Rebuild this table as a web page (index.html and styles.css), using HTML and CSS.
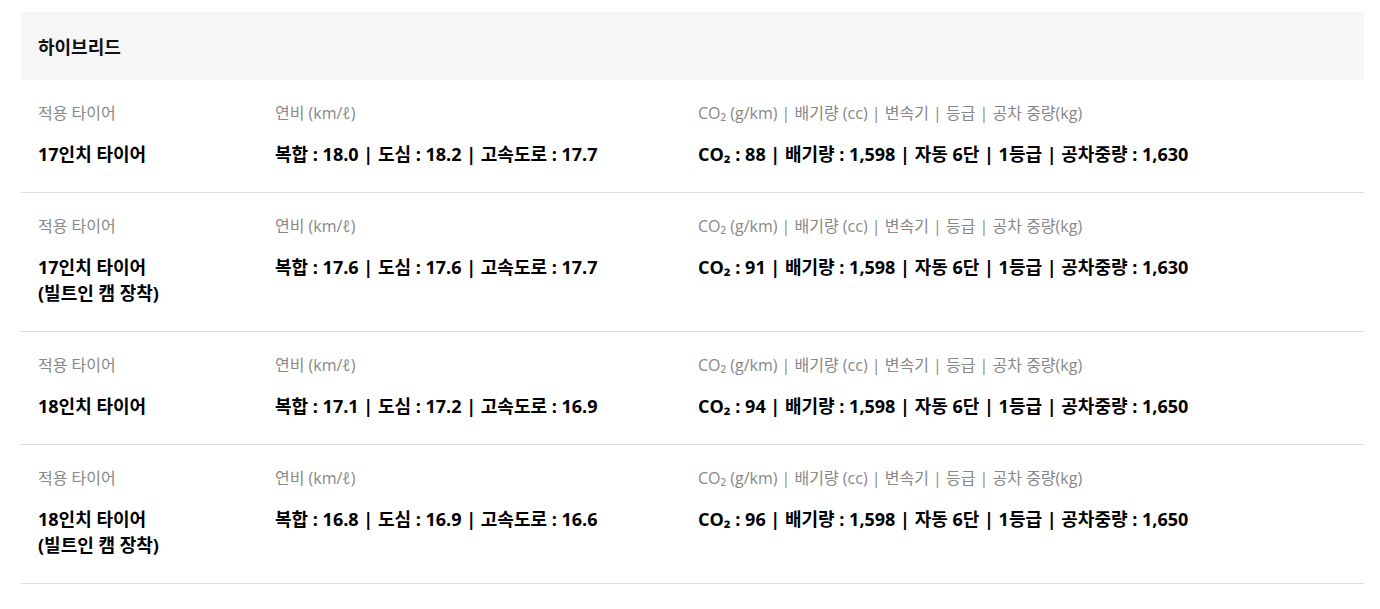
FILE: index.html
```html
<!DOCTYPE html>
<html lang="ko">
<head>
    <meta charset="UTF-8">
    <meta name="viewport" content="width=device-width, initial-scale=1.0">
    <title>하이브리드 제원</title>
    <link rel="stylesheet" href="styles.css">
</head>
<body>
    <div class="spec-box">
        <div class="spec-head">하이브리드</div>

        <div class="spec-row">
            <div class="spec-col col-tire">
                <p class="spec-label">적용 타이어</p>
                <p class="spec-value">17인치 타이어</p>
            </div>
            <div class="spec-col col-fuel">
                <p class="spec-label">연비 (km/ℓ)</p>
                <p class="spec-value">복합 : 18.0 | 도심 : 18.2 | 고속도로 : 17.7</p>
            </div>
            <div class="spec-col">
                <p class="spec-label">CO₂ (g/km) | 배기량 (cc) | 변속기 | 등급 | 공차 중량(kg)</p>
                <p class="spec-value">CO₂ : 88 | 배기량 : 1,598 | 자동 6단 | 1등급 | 공차중량 : 1,630</p>
            </div>
        </div>

        <div class="spec-row">
            <div class="spec-col col-tire">
                <p class="spec-label">적용 타이어</p>
                <p class="spec-value">17인치 타이어<br>(빌트인 캠 장착)</p>
            </div>
            <div class="spec-col col-fuel">
                <p class="spec-label">연비 (km/ℓ)</p>
                <p class="spec-value">복합 : 17.6 | 도심 : 17.6 | 고속도로 : 17.7</p>
            </div>
            <div class="spec-col">
                <p class="spec-label">CO₂ (g/km) | 배기량 (cc) | 변속기 | 등급 | 공차 중량(kg)</p>
                <p class="spec-value">CO₂ : 91 | 배기량 : 1,598 | 자동 6단 | 1등급 | 공차중량 : 1,630</p>
            </div>
        </div>

        <div class="spec-row">
            <div class="spec-col col-tire">
                <p class="spec-label">적용 타이어</p>
                <p class="spec-value">18인치 타이어</p>
            </div>
            <div class="spec-col col-fuel">
                <p class="spec-label">연비 (km/ℓ)</p>
                <p class="spec-value">복합 : 17.1 | 도심 : 17.2 | 고속도로 : 16.9</p>
            </div>
            <div class="spec-col">
                <p class="spec-label">CO₂ (g/km) | 배기량 (cc) | 변속기 | 등급 | 공차 중량(kg)</p>
                <p class="spec-value">CO₂ : 94 | 배기량 : 1,598 | 자동 6단 | 1등급 | 공차중량 : 1,650</p>
            </div>
        </div>

        <div class="spec-row">
            <div class="spec-col col-tire">
                <p class="spec-label">적용 타이어</p>
                <p class="spec-value">18인치 타이어<br>(빌트인 캠 장착)</p>
            </div>
            <div class="spec-col col-fuel">
                <p class="spec-label">연비 (km/ℓ)</p>
                <p class="spec-value">복합 : 16.8 | 도심 : 16.9 | 고속도로 : 16.6</p>
            </div>
            <div class="spec-col">
                <p class="spec-label">CO₂ (g/km) | 배기량 (cc) | 변속기 | 등급 | 공차 중량(kg)</p>
                <p class="spec-value">CO₂ : 96 | 배기량 : 1,598 | 자동 6단 | 1등급 | 공차중량 : 1,650</p>
            </div>
        </div>
    </div>
</body>
</html>
```

FILE: styles.css
```css
body {
    margin: 0;
    background-color: #fff;
    font-family: "Open Sans", "Noto Sans CJK KR", sans-serif;
    color: #000;
}
p {
    margin: 0;
}
.spec-box {
    margin: 12px 16px 0 21px;
}
.spec-head {
    background-color: #f6f6f6;
    height: 68px;
    padding-left: 17px;
    display: flex;
    align-items: center;
    font-size: 18px;
    font-weight: bold;
    color: #111;
}
.spec-row {
    display: flex;
    padding: 22px 0 25px 17px;
    border-bottom: 1px solid #dcdcdc;
}
.spec-col {
    flex: 1;
}
.col-tire {
    flex: 0 0 237px;
}
.col-fuel {
    flex: 0 0 423px;
}
.spec-label {
    font-size: 16px;
    line-height: 22px;
    color: #888; /* 회색 라벨 */
}
.spec-value {
    margin-top: 17px;
    font-size: 18px;
    line-height: 26px;
    font-weight: bold;
    color: #000;
}
```
